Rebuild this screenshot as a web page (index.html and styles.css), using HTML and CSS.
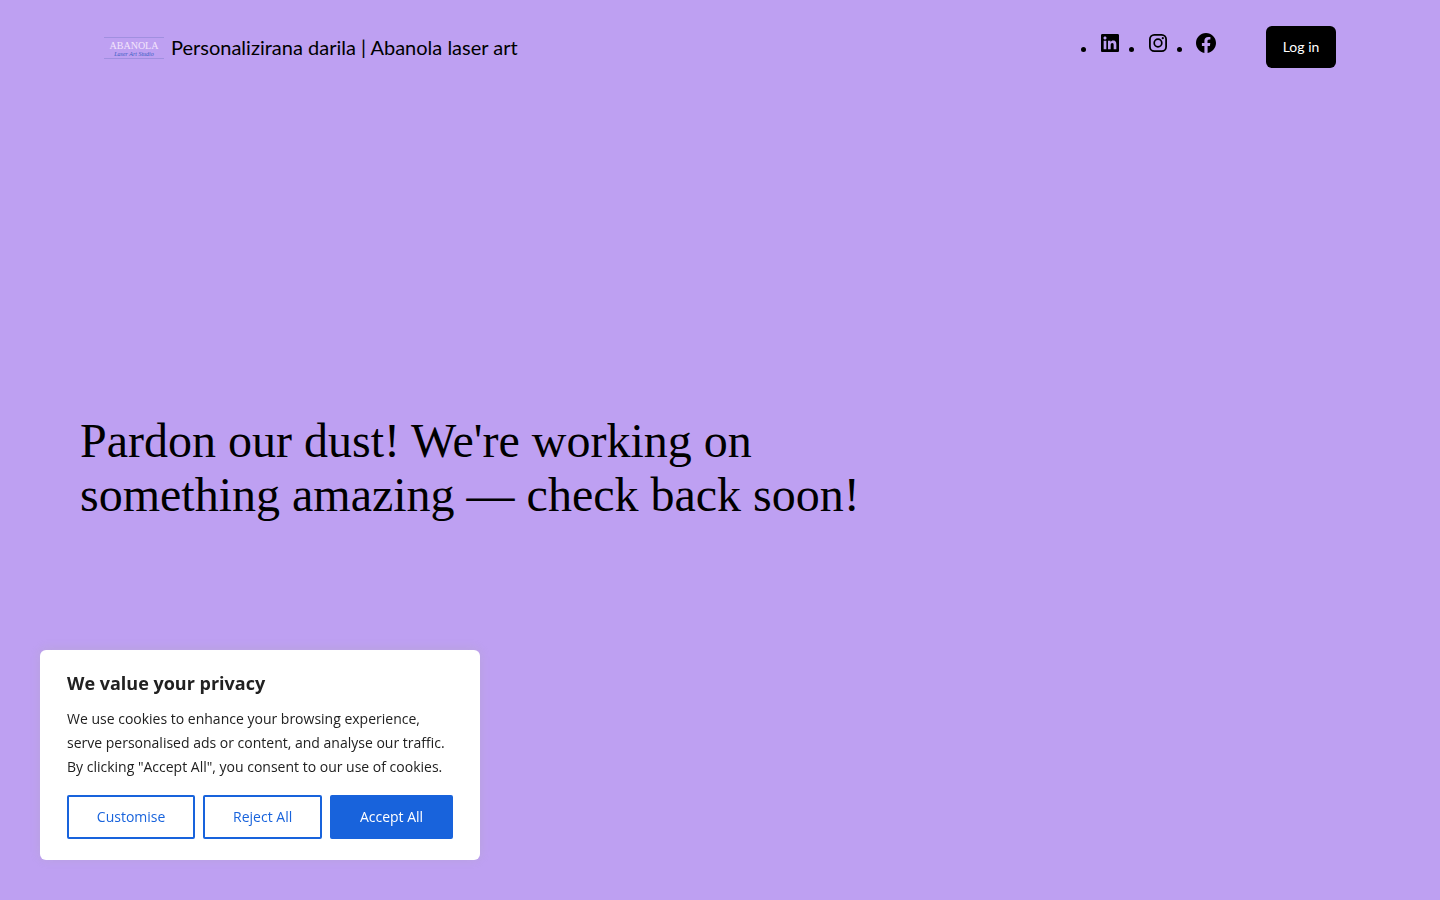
FILE: index.html
```html
<!DOCTYPE html>
<html lang="en">
<head>
<meta charset="utf-8">
<meta name="viewport" content="width=device-width, initial-scale=1">
<title>Personalizirana darila | Abanola laser art</title>
<link rel="stylesheet" href="styles.css">
</head>
<body>
<header class="site-header">
  <div class="brand">
    <a class="brand-logo" href="#" aria-label="Abanola home">
      <svg width="60" height="24" viewBox="0 0 60 24">
        <path d="M0 2.5H60M0 23.5H60" stroke="#a18fe0" stroke-width="1"/>
        <text class="logo-name" x="30" y="14" text-anchor="middle">ABANOLA</text>
        <text class="logo-tag" x="30" y="21" text-anchor="middle">Laser Art Studio</text>
      </svg>
    </a>
    <a class="brand-title" href="#">Personalizirana darila | Abanola laser art</a>
  </div>
  <nav class="header-nav" aria-label="Social and account">
    <ul class="social-list">
      <li class="social-item"><span class="social-dot"></span>
        <a class="social-link" href="#" aria-label="LinkedIn"><svg width="24" height="24" viewBox="0 0 24 24"><path d="M19.7 3H4.3C3.582 3 3 3.582 3 4.3v15.4c0 .718.582 1.3 1.3 1.3h15.4c.718 0 1.3-.582 1.3-1.3V4.3c0-.718-.582-1.3-1.3-1.3zM8.339 18.338H5.667v-8.59h2.672v8.59zM7.004 8.574c-.857 0-1.549-.694-1.549-1.548 0-.855.691-1.548 1.549-1.548.854 0 1.547.694 1.547 1.548 0 .855-.693 1.548-1.547 1.548zm11.335 9.764h-2.669v-4.177c0-.996-.017-2.278-1.387-2.278-1.389 0-1.601 1.086-1.601 2.206v4.249h-2.667v-8.59h2.559v1.174h.037c.356-.675 1.227-1.387 2.526-1.387 2.703 0 3.203 1.779 3.203 4.092v4.711z"/></svg></a></li>
      <li class="social-item"><span class="social-dot"></span>
        <a class="social-link" href="#" aria-label="Instagram"><svg width="24" height="24" viewBox="0 0 24 24"><rect x="3.9" y="3.9" width="16.2" height="16.2" rx="4.4" fill="none" stroke="#000" stroke-width="1.8"/><circle cx="12" cy="12" r="3.8" fill="none" stroke="#000" stroke-width="1.7"/><circle cx="16.8" cy="7.2" r="1.1"/></svg></a></li>
      <li class="social-item"><span class="social-dot"></span>
        <a class="social-link" href="#" aria-label="Facebook"><svg width="24" height="24" viewBox="0 0 24 24"><path d="M12 2C6.5 2 2 6.5 2 12c0 5 3.7 9.1 8.4 9.9v-7H7.9V12h2.5V9.8c0-2.5 1.5-3.9 3.8-3.9 1.1 0 2.2.2 2.2.2v2.5h-1.3c-1.2 0-1.6.8-1.6 1.6V12h2.8l-.4 2.9h-2.3v7C18.3 21.1 22 17 22 12c0-5.5-4.5-10-10-10z"/></svg></a></li>
    </ul>
    <a class="login" href="#">Log in</a>
  </nav>
</header>
<main class="notice">
  <h1 class="notice-title">Pardon our dust! We're working on something amazing — check back soon!</h1>
</main>
<section class="consent" aria-labelledby="consent-title">
  <h2 class="consent-title" id="consent-title">We value your privacy</h2>
  <p class="consent-text">We use cookies to enhance your browsing experience, serve personalised ads or content, and analyse our traffic. By clicking "Accept All", you consent to our use of cookies.</p>
  <div class="consent-actions">
    <button class="consent-button" type="button">Customise</button>
    <button class="consent-button" type="button">Reject All</button>
    <button class="consent-button consent-primary" type="button">Accept All</button>
  </div>
</section>
</body>
</html>
```
FILE: styles.css
```css
* {
  box-sizing: border-box;
}

body {
  margin: 0;
  min-height: 100vh;
  display: flex;
  flex-direction: column;
  background: #bea0f2;
  color: #000;
  font-family: "Open Sans", "Noto Sans", sans-serif;
}

a {
  color: inherit;
  text-decoration: none;
}

svg {
  display: block;
}

.site-header {
  display: flex;
  align-items: center;
  justify-content: space-between;
  gap: 24px;
  padding: 26px 104px;
  font-family: Lato, "Open Sans", sans-serif;
}

.brand {
  display: flex;
  align-items: center;
  gap: 7px;
}

.logo-name {
  font: 10px "Liberation Serif", serif;
  fill: #f3e4fb;
}

.logo-tag {
  font: italic 6px "Liberation Serif", serif;
  fill: #3c5fc4;
}

.brand-title {
  font-size: 20px;
  line-height: 28px;
}

.header-nav {
  display: flex;
  align-items: center;
  gap: 48px;
}

.social-list {
  display: flex;
  gap: 7px;
  margin: 0;
  padding: 0;
  list-style: none;
}

.social-item {
  display: flex;
  align-items: flex-start;
  gap: 12px;
  height: 32px;
}

.social-dot {
  width: 5px;
  height: 5px;
  margin-top: 16px;
  border-radius: 50%;
  background: #000;
}

.login {
  min-width: 70px;
  padding: 11px 16px;
  border-radius: 6px;
  background: #000;
  color: #fff;
  font-size: 14px;
  line-height: 20px;
  text-align: center;
  white-space: nowrap;
}

.notice {
  flex: 1;
  display: flex;
  align-items: center;
  padding: 0 80px 58px;
}

.notice-title {
  max-width: 800px;
  margin: 0;
  font: 400 48px/54px "Liberation Serif", serif;
}

.consent {
  position: fixed;
  left: 40px;
  bottom: 40px;
  width: 440px;
  max-width: calc(100% - 80px);
  padding: 21px 27px;
  border-radius: 6px;
  background: #fff;
  box-shadow: 0 -1px 10px rgba(172, 171, 171, 0.3);
  color: #212121;
}

.consent-title {
  margin: 0 0 12px;
  font-size: 18px;
  font-weight: 700;
  line-height: 24px;
}

.consent-text {
  margin: 0 0 16px;
  font-size: 14px;
  line-height: 24px;
}

.consent-actions {
  display: flex;
  gap: 8px;
}

.consent-button {
  flex: auto;
  padding: 8px 27px;
  border: 2px solid #1863dc;
  border-radius: 2px;
  background: transparent;
  color: #1863dc;
  font: 500 14px/24px "Open Sans", "Noto Sans", sans-serif;
  height: 44px;
  white-space: nowrap;
}

.consent-primary {
  background: #1863dc;
  color: #fff;
}
```
